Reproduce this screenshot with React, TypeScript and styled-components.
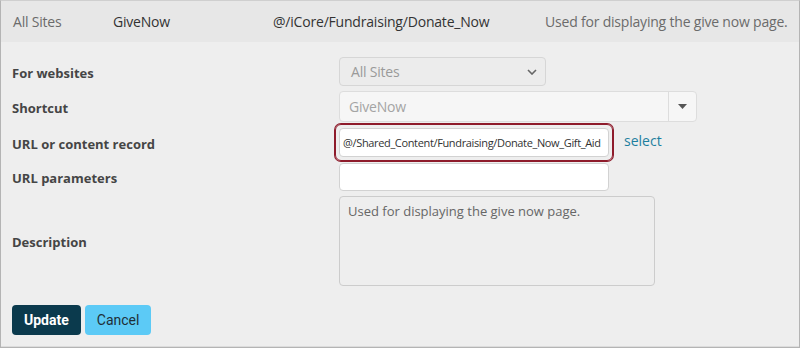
import React from 'react';
import styled, { createGlobalStyle } from 'styled-components';

const GlobalStyle = createGlobalStyle`
  html, body {
    margin: 0;
    padding: 0;
    background: #ffffff;
  }
  body {
    font-family: 'Open Sans', 'Liberation Sans', sans-serif;
  }
`;

const Frame = styled.div`
  box-sizing: border-box;
  width: 800px;
  height: 348px;
  border: 1px solid #b4b4b4;
  border-top-color: #cfcfcf;
  background: #eeeeee;
  display: flex;
  flex-direction: column;
`;

const SummaryRow = styled.div`
  height: 41px;
  background: #e7e7e7;
  display: grid;
  grid-template-columns: 100px 160px 272px 1fr;
  align-items: center;
  padding-left: 12px;
  font-size: 14px;
  letter-spacing: -0.2px;
`;

const SummaryCell = styled.span<{ $muted?: boolean }>`
  color: ${p => (p.$muted ? '#6b6b6b' : '#333333')};
  white-space: nowrap;
`;

const Form = styled.div`
  flex: 1;
  display: grid;
  grid-template-columns: 327px 1fr;
  align-content: start;
  align-items: center;
  padding: 15px 0 0 11px;
  border-bottom: 1px solid #dcdcdc;
`;

const Label = styled.div<{ $mt?: number }>`
  font-size: 13px;
  font-weight: 700;
  color: #454545;
  margin-top: ${p => p.$mt ?? 0}px;
  padding-top: 2px;
`;

const Field = styled.div<{ $mt?: number }>`
  display: flex;
  align-items: center;
  margin-top: ${p => p.$mt ?? 0}px;
`;

const SelectBox = styled.div`
  box-sizing: border-box;
  width: 207px;
  height: 29px;
  border: 1px solid #d6d6d6;
  border-radius: 4px;
  background: #ececec;
  display: flex;
  align-items: center;
  justify-content: space-between;
  padding: 0 8px 0 11px;
  font-size: 14px;
  letter-spacing: -0.2px;
  color: #9a9a9a;
`;

const Combo = styled.div`
  box-sizing: border-box;
  width: 358px;
  height: 31px;
  border: 1px solid #dddddd;
  border-radius: 4px;
  background: #f6f6f6;
  display: flex;
  align-items: stretch;
  font-size: 14px;
  letter-spacing: -0.2px;
  color: #a4a4a4;
`;

const ComboText = styled.div`
  flex: 1;
  display: flex;
  align-items: center;
  padding-left: 9px;
`;

const ComboButton = styled.div`
  width: 27px;
  border-left: 1px solid #dddddd;
  display: flex;
  align-items: center;
  justify-content: center;
`;

const FocusRing = styled.div`
  box-sizing: border-box;
  margin-left: -4px;
  padding: 3px;
  border: 1px solid #8e1b2b;
  border-radius: 6px;
  box-shadow: 0 0 0 1px #8e1b2b;
`;

const TextInput = styled.div<{ $height: number }>`
  box-sizing: border-box;
  width: 270px;
  height: ${p => p.$height}px;
  background: #ffffff;
  border: 1px solid #d2d2d2;
  border-radius: 4px;
  display: flex;
  align-items: center;
  padding-left: 3px;
  font-size: 11px;
  letter-spacing: -0.35px;
  color: #333333;
  white-space: nowrap;
  overflow: hidden;
`;

const SelectLink = styled.a`
  margin-left: 11px;
  margin-top: -4px;
  font-size: 14px;
  color: #1d7f9f;
  text-decoration: none;
`;

const TextArea = styled.div`
  box-sizing: border-box;
  width: 316px;
  height: 90px;
  border: 1px solid #cccccc;
  border-radius: 4px;
  background: #eeeeee;
  padding: 5px 8px;
  font-size: 13px;
  color: #666666;
`;

const Actions = styled.div`
  grid-column: 1 / -1;
  display: flex;
  gap: 4px;
  margin-top: 19px;
`;

const Button = styled.button<{ $primary?: boolean }>`
  height: 30px;
  padding: 0 12px;
  border: none;
  border-radius: 4px;
  font-family: Roboto, 'Liberation Sans', sans-serif;
  font-size: 14px;
  font-weight: ${p => (p.$primary ? 700 : 400)};
  background: ${p => (p.$primary ? '#0b3a4d' : '#5ccaf6')};
  color: ${p => (p.$primary ? '#ffffff' : '#1f2f38')};
`;

const Chevron = () => (
  <svg width="10" height="6" viewBox="0 0 10 6">
    <path d="M1 1l4 4 4-4" fill="none" stroke="#666" strokeWidth="1.6" />
  </svg>
);

const Caret = () => (
  <svg width="9" height="5" viewBox="0 0 9 5">
    <path d="M0 0h9L4.5 5z" fill="#555" />
  </svg>
);

export default function App() {
  return (
    <>
      <GlobalStyle />
      <Frame>
        <SummaryRow>
          <SummaryCell $muted>All Sites</SummaryCell>
          <SummaryCell>GiveNow</SummaryCell>
          <SummaryCell>@/iCore/Fundraising/Donate_Now</SummaryCell>
          <SummaryCell $muted>Used for displaying the give now page.</SummaryCell>
        </SummaryRow>
        <Form>
          <Label>For websites</Label>
          <Field>
            <SelectBox>
              All Sites
              <Chevron />
            </SelectBox>
          </Field>

          <Label $mt={5}>Shortcut</Label>
          <Field $mt={5}>
            <Combo>
              <ComboText>GiveNow</ComboText>
              <ComboButton>
                <Caret />
              </ComboButton>
            </Combo>
          </Field>

          <Label $mt={2}>URL or content record</Label>
          <Field $mt={2}>
            <FocusRing>
              <TextInput $height={29}>@/Shared_Content/Fundraising/Donate_Now_Gift_Aid</TextInput>
            </FocusRing>
            <SelectLink href="#">select</SelectLink>
          </Field>

          <Label $mt={2}>URL parameters</Label>
          <Field $mt={2}>
            <TextInput $height={28} />
          </Field>

          <Label $mt={5}>Description</Label>
          <Field $mt={5}>
            <TextArea>Used for displaying the give now page.</TextArea>
          </Field>

          <Actions>
            <Button $primary>Update</Button>
            <Button>Cancel</Button>
          </Actions>
        </Form>
      </Frame>
    </>
  );
}
